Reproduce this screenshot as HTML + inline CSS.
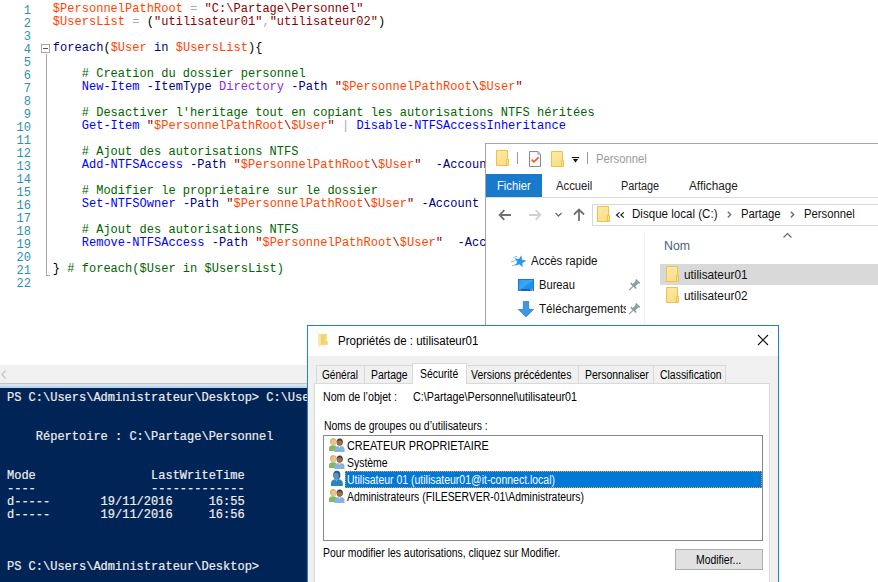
<!DOCTYPE html>
<html><head><meta charset="utf-8">
<style>
*{margin:0;padding:0;box-sizing:border-box}
html,body{width:878px;height:582px;overflow:hidden;background:#fff;position:relative}
.mono{font-family:"Liberation Mono",monospace;font-size:12px;line-height:13px;white-space:pre}
.sans{font-family:"Liberation Sans",sans-serif;white-space:pre}
.abs{position:absolute}
.tx{position:absolute;font-family:"Liberation Sans",sans-serif;white-space:pre;line-height:16px;transform-origin:0 0}
#ln{position:absolute;left:0;top:4.5px;width:31px;text-align:right;color:#2B91AF}
#code{position:absolute;left:52.8px;top:3px;color:#000;letter-spacing:0.025px}
.v{color:#FF4500}.s{color:#8B0000}.k{color:#00008B}.c{color:#0000FF}.p{color:#000080}.a{color:#8A2BE2}.o{color:#A9A9A9}.cm{color:#006400}
#console{position:absolute;left:0;top:388px;width:307px;height:194px;background:#012456;overflow:hidden}
#ctext{position:absolute;left:7px;top:4px;color:#EEEDF0;-webkit-text-stroke:0.2px #EEEDF0}
</style></head><body>
<svg width="0" height="0" style="position:absolute"><defs><linearGradient id="fg" x1="0" y1="0" x2="0.3" y2="1"><stop offset="0" stop-color="#fde8a6"/><stop offset="1" stop-color="#fcdf8a"/></linearGradient></defs></svg>
<div id="ln" class="mono">1
2
3
4
5
6
7
8
9
10
11
12
13
14
15
16
17
18
19
20
21
22</div>
<div class="abs" style="left:41px;top:44px;width:9px;height:9px;border:1px solid #a5a5a5;background:#fff"></div>
<div class="abs" style="left:43px;top:48px;width:5px;height:1px;background:#555"></div>
<div class="abs" style="left:46px;top:54px;width:1px;height:222px;background:#a5a5a5"></div>
<div class="abs" style="left:46px;top:275px;width:4px;height:1px;background:#a5a5a5"></div>
<div id="code" class="mono"><span class="v">$PersonnelPathRoot</span> <span class="o">=</span> <span class="s">"C:\Partage\Personnel"</span>
<span class="v">$UsersList</span> <span class="o">=</span> (<span class="s">"utilisateur01"</span><span class="o">,</span><span class="s">"utilisateur02"</span>)

<span class="k">foreach</span>(<span class="v">$User</span> <span class="k">in</span> <span class="v">$UsersList</span>){

    <span class="cm"># Creation du dossier personnel</span>
    <span class="c">New-Item</span> <span class="p">-ItemType</span> <span class="a">Directory</span> <span class="p">-Path</span> <span class="s">"</span><span class="v">$PersonnelPathRoot</span><span class="s">\</span><span class="v">$User</span><span class="s">"</span>

    <span class="cm"># Desactiver l'heritage tout en copiant les autorisations NTFS héritées</span>
    <span class="c">Get-Item</span> <span class="s">"</span><span class="v">$PersonnelPathRoot</span><span class="s">\</span><span class="v">$User</span><span class="s">"</span> <span class="o">|</span> <span class="c">Disable-NTFSAccessInheritance</span>

    <span class="cm"># Ajout des autorisations NTFS</span>
    <span class="c">Add-NTFSAccess</span> <span class="p">-Path</span> <span class="s">"</span><span class="v">$PersonnelPathRoot</span><span class="s">\</span><span class="v">$User</span><span class="s">"</span>  <span class="p">-Account</span> <span class="s">"IT-CONNECT\$User"</span>

    <span class="cm"># Modifier le proprietaire sur le dossier</span>
    <span class="c">Set-NTFSOwner</span> <span class="p">-Path</span> <span class="s">"</span><span class="v">$PersonnelPathRoot</span><span class="s">\</span><span class="v">$User</span><span class="s">"</span> <span class="p">-Account</span> <span class="s">"IT-CONNECT\$User"</span>

    <span class="cm"># Ajout des autorisations NTFS</span>
    <span class="c">Remove-NTFSAccess</span> <span class="p">-Path</span> <span class="s">"</span><span class="v">$PersonnelPathRoot</span><span class="s">\</span><span class="v">$User</span><span class="s">"</span>  <span class="p">-Account</span> <span class="s">"CREATEUR PROPRIETAIRE"</span>

} <span class="cm"># foreach($User in $UsersList)</span>
</div>
<!-- hscroll -->
<div class="abs" style="left:0;top:365px;width:307px;height:18px;background:#f0f0f0"></div>
<svg class="abs" style="left:0;top:365px" width="12" height="18"><path d="M5.5 5.5 L2 9.5 L5.5 13.5" stroke="#c4c4c4" stroke-width="1.2" fill="none"/></svg>
<div class="abs" style="left:0;top:383px;width:307px;height:1px;background:#c9c3bb"></div>
<div class="abs" style="left:0;top:384px;width:307px;height:2px;background:#dae5ee"></div>
<div class="abs" style="left:0;top:386px;width:307px;height:2px;background:#bcd7f6"></div>
<div id="console"><div id="ctext" class="mono">PS C:\Users\Administrateur\Desktop> C:\Users\Administrateur\Desktop\script.ps1


    Répertoire : C:\Partage\Personnel


Mode                LastWriteTime         Length Name
----                -------------         ------ ----
d-----       19/11/2016     16:55                utilisateur01
d-----       19/11/2016     16:56                utilisateur02



PS C:\Users\Administrateur\Desktop></div></div>

<!-- EXPLORER -->
<div class="abs" style="left:485px;top:143px;width:393px;height:182px;background:#fff;border-left:1px solid #a3a3a3;border-top:1px solid #a6a6a6"></div>
<svg class="abs" style="left:496px;top:150px" width="14" height="16"><path d="M0.5 0.5 H11.5 V15.5 H0.5 Z" fill="url(#fg)" stroke="#ebc24a"/><path d="M10.5 9.5 H12.5 V15.5 H10.5 Z" fill="#fce394" stroke="#ebc24a"/></svg>
<div class="abs" style="left:517px;top:152px;width:1px;height:12px;background:#9a9a9a"></div>
<svg class="abs" style="left:529px;top:151px" width="14" height="17"><path d="M0.5 0.5 H8.8 L11.5 3.2 V15.5 H0.5 Z" fill="#f6f8fa" stroke="#8a8a8a"/><path d="M8.8 0.5 V3.2 H11.5Z" fill="#e6e6e6" stroke="#9a9a9a" stroke-width="0.8"/><path d="M2.6 8.6 L4.9 10.9 L9.6 6.4" stroke="#f05a28" stroke-width="1.5" fill="none"/></svg>
<svg class="abs" style="left:551px;top:151px" width="14" height="16"><path d="M0.5 0.5 H11.5 V15.5 H0.5 Z" fill="url(#fg)" stroke="#ebc24a"/><path d="M10.5 9.5 H12.5 V15.5 H10.5 Z" fill="#fce394" stroke="#ebc24a"/></svg>
<svg class="abs" style="left:570px;top:154px" width="12" height="12"><rect x="1.8" y="3" width="7.4" height="1.1" fill="#111"/><path d="M2.9 5 H8.1 L5.5 8.6 Z" fill="#111"/></svg>
<div class="abs" style="left:587px;top:152px;width:1px;height:12px;background:#9a9a9a"></div>
<div class="abs" style="left:486px;top:174px;width:56px;height:23px;background:#1979ca"></div>
<div class="abs" style="left:486px;top:197px;width:392px;height:1px;background:#dadbdc"></div>
<svg class="abs" style="left:486px;top:198px" width="106" height="34">
 <path d="M13.6 17 H25 M18.3 12.2 L13.6 17 L18.3 21.8" stroke="#707070" stroke-width="1.8" fill="none"/>
 <path d="M43 17 H54.4 M49.7 12.2 L54.4 17 L49.7 21.8" stroke="#d2d2d2" stroke-width="1.8" fill="none"/>
 <path d="M69.5 15 L72.5 18 L75.5 15" stroke="#6d6d6d" stroke-width="1.3" fill="none"/>
 <path d="M93 11.5 V23 M88 16.5 L93 11.5 L98 16.5" stroke="#707070" stroke-width="1.8" fill="none"/>
</svg>
<div class="abs" style="left:592px;top:204px;width:290px;height:22px;border:1px solid #d9d9d9;background:#fff"></div>
<svg class="abs" style="left:597px;top:206px" width="14" height="16"><path d="M0.5 0.5 H11.5 V15.5 H0.5 Z" fill="url(#fg)" stroke="#ebc24a"/><path d="M10.5 9.5 H12.5 V15.5 H10.5 Z" fill="#fce394" stroke="#ebc24a"/></svg>
<svg class="abs" style="left:615px;top:211px" width="11" height="8"><path d="M4.6 1.4 L1.5 4 L4.6 6.6 M8.9 1.4 L5.8 4 L8.9 6.6" stroke="#1a1a1a" stroke-width="1.15" fill="none"/></svg>
<svg class="abs" style="left:724px;top:209px" width="10" height="12"><path d="M3.8 2.8 L6.6 5.6 L3.8 8.4" stroke="#6e6e6e" stroke-width="1.4" fill="none"/></svg>
<svg class="abs" style="left:787px;top:209px" width="10" height="12"><path d="M3.8 2.8 L6.6 5.6 L3.8 8.4" stroke="#6e6e6e" stroke-width="1.4" fill="none"/></svg>
<div class="abs" style="left:644px;top:233px;width:1px;height:92px;background:#f0f0f0"></div>
<svg class="abs" style="left:508px;top:254px" width="22" height="16"><path d="M5.5 3.5 L9.5 2.2 M3 7.8 L7.5 6.6 M4 11.8 L8 10.4" stroke="#7cc0f2" stroke-width="1"/><path d="M13.33 1.24 L14.08 5.63 L18.36 6.83 L14.42 8.90 L14.60 13.35 L11.42 10.24 L7.24 11.78 L9.22 7.79 L6.46 4.30 L10.86 4.94Z" fill="#2a98ee"/></svg>
<svg class="abs" style="left:518px;top:279px" width="17" height="13"><defs><linearGradient id="bg1" x1="0" y1="0" x2="1" y2="1"><stop offset="0" stop-color="#2a9cf6"/><stop offset="0.5" stop-color="#3aa6f8"/><stop offset="0.52" stop-color="#2293f0"/><stop offset="1" stop-color="#1e8ae6"/></linearGradient></defs><rect x="0.5" y="0.5" width="15" height="11" fill="url(#bg1)" stroke="#1a78c8"/><rect x="1" y="10" width="14" height="2" fill="#1766b0"/><rect x="1.5" y="10.5" width="1" height="1" fill="#fff"/><rect x="12.5" y="10.5" width="1" height="1" fill="#fff"/><rect x="14" y="10.5" width="1" height="1" fill="#fff"/></svg>
<svg class="abs" style="left:627px;top:279px" width="14" height="14"><g transform="translate(6.5,6.8) rotate(45) scale(1.05)" fill="#8e99a2"><rect x="-2.6" y="-6.5" width="5.2" height="1.6"/><rect x="-1.7" y="-5" width="3.4" height="4.5"/><rect x="-3.6" y="-0.8" width="7.2" height="1.6"/><rect x="-0.55" y="0.8" width="1.1" height="5"/></g></svg>
<svg class="abs" style="left:518px;top:300px" width="17" height="18"><path d="M5.3 1.5 H10.7 V9.5 H15.5 L8 16.8 L0.5 9.5 H5.3Z" fill="#3c97e7" stroke="#2b7fd0" stroke-width="0.8" stroke-linejoin="miter"/></svg>
<div class="abs" style="left:539px;top:300px;width:87px;height:18px;overflow:hidden"><div class="tx" style="left:0;top:0.84px;font-size:12px;color:#111;transform:scaleX(0.97)">Téléchargements</div></div>
<svg class="abs" style="left:627px;top:303px" width="14" height="14"><g transform="translate(6.5,6.8) rotate(45) scale(1.05)" fill="#8e99a2"><rect x="-2.6" y="-6.5" width="5.2" height="1.6"/><rect x="-1.7" y="-5" width="3.4" height="4.5"/><rect x="-3.6" y="-0.8" width="7.2" height="1.6"/><rect x="-0.55" y="0.8" width="1.1" height="5"/></g></svg>
<svg class="abs" style="left:782px;top:231px" width="12" height="8"><path d="M1.5 6.5 L5.5 2.5 L9.5 6.5" stroke="#666" stroke-width="1.1" fill="none"/></svg>
<div class="abs" style="left:660px;top:264px;width:218px;height:21px;background:#d9d9d9"></div>
<svg class="abs" style="left:666px;top:266px" width="14" height="16"><path d="M0.5 0.5 H11.5 V15.5 H0.5 Z" fill="url(#fg)" stroke="#ebc24a"/><path d="M10.5 9.5 H12.5 V15.5 H10.5 Z" fill="#fce394" stroke="#ebc24a"/></svg>
<svg class="abs" style="left:666px;top:287px" width="14" height="16"><path d="M0.5 0.5 H11.5 V15.5 H0.5 Z" fill="url(#fg)" stroke="#ebc24a"/><path d="M10.5 9.5 H12.5 V15.5 H10.5 Z" fill="#fce394" stroke="#ebc24a"/></svg>

<!-- DIALOG -->
<div class="abs" style="left:307px;top:325px;width:472px;height:260px;background:#fff;border:1px solid #1f83d5"></div>
<svg class="abs" style="left:318px;top:334px" width="11" height="14"><path d="M0.5 0 H8.7 V7 H9.7 V11 H0.5Z" fill="#f7d675"/><path d="M0.5 0.3 L3.7 2 V11.3 L0.5 13.3Z" fill="#fbe6a6"/><path d="M3.7 2 V11.3" stroke="#eec45a" stroke-width="0.8"/></svg>
<svg class="abs" style="left:757px;top:334px" width="12" height="12"><path d="M1 1 L11 11 M11 1 L1 11" stroke="#111" stroke-width="1.1"/></svg>
<div class="abs" style="left:308px;top:356px;width:470px;height:226px;background:#f0f0f0"></div>
<div class="abs" style="left:316px;top:365px;width:49px;height:19px;border:1px solid #d9d9d9;border-bottom:none;background:#f0f0f0"></div>
<div class="abs" style="left:364px;top:365px;width:49px;height:19px;border:1px solid #d9d9d9;border-bottom:none;background:#f0f0f0"></div>
<div class="abs" style="left:466px;top:365px;width:113px;height:19px;border:1px solid #d9d9d9;border-bottom:none;background:#f0f0f0"></div>
<div class="abs" style="left:578px;top:365px;width:76px;height:19px;border:1px solid #d9d9d9;border-bottom:none;background:#f0f0f0"></div>
<div class="abs" style="left:653px;top:365px;width:73px;height:19px;border:1px solid #d9d9d9;border-bottom:none;background:#f0f0f0"></div>
<div class="abs" style="left:314px;top:383px;width:456px;height:210px;border:1px solid #d9d9d9;background:#fff"></div>
<div class="abs" style="left:412px;top:363px;width:55px;height:21px;border:1px solid #d9d9d9;border-bottom:none;background:#fff"></div>
<div class="abs" style="left:323px;top:435px;width:440px;height:106px;border:1px solid #828790;background:#fff"></div>
<div class="abs" style="left:345px;top:471px;width:417px;height:17px;background:#0078d7;outline:1px dotted #f0a030;outline-offset:-1px"></div>
<svg class="abs" style="left:329px;top:437px" width="17" height="16">
<ellipse cx="4.2" cy="4.6" rx="3.2" ry="3.6" fill="#d6b56c"/><ellipse cx="4.8" cy="5.4" rx="2.4" ry="2.8" fill="#e6c39a"/>
<path d="M0 14 V11.2 Q0 8.3 4 8.3 Q7.3 8.3 7.8 10.5 V14.2Z" fill="#84b85c"/>
<ellipse cx="10.7" cy="5" rx="3.1" ry="3.6" fill="#3b3b3b"/><ellipse cx="10.5" cy="6" rx="2.6" ry="2.7" fill="#a46e43"/>
<path d="M5.5 15 V12 Q5.5 9 10.5 9 Q15.5 9 15.5 12 V15Z" fill="#86b3e0"/><path d="M9.3 9.3 L10.5 11 L11.7 9.3Z" fill="#e8f2fb"/>
</svg>
<svg class="abs" style="left:329px;top:454px" width="17" height="16">
<ellipse cx="4.2" cy="4.6" rx="3.2" ry="3.6" fill="#d6b56c"/><ellipse cx="4.8" cy="5.4" rx="2.4" ry="2.8" fill="#e6c39a"/>
<path d="M0 14 V11.2 Q0 8.3 4 8.3 Q7.3 8.3 7.8 10.5 V14.2Z" fill="#84b85c"/>
<ellipse cx="10.7" cy="5" rx="3.1" ry="3.6" fill="#3b3b3b"/><ellipse cx="10.5" cy="6" rx="2.6" ry="2.7" fill="#a46e43"/>
<path d="M5.5 15 V12 Q5.5 9 10.5 9 Q15.5 9 15.5 12 V15Z" fill="#86b3e0"/><path d="M9.3 9.3 L10.5 11 L11.7 9.3Z" fill="#e8f2fb"/>
</svg>
<svg class="abs" style="left:331px;top:470px" width="13" height="17"><ellipse cx="5.8" cy="5" rx="3.6" ry="4.3" fill="#1f5d9c"/><ellipse cx="5.2" cy="6" rx="2.6" ry="3.2" fill="#5e8fb8"/><path d="M0 16 V12.8 Q0.5 9 5.8 9 Q11.5 9 11.8 12.8 V16Z" fill="#2f86b6"/><path d="M4.2 9.3 L5.3 11.5 L6.6 9.3Z" fill="#79b8e0"/></svg>
<svg class="abs" style="left:329px;top:488px" width="17" height="16">
<ellipse cx="4.2" cy="4.6" rx="3.2" ry="3.6" fill="#d6b56c"/><ellipse cx="4.8" cy="5.4" rx="2.4" ry="2.8" fill="#e6c39a"/>
<path d="M0 14 V11.2 Q0 8.3 4 8.3 Q7.3 8.3 7.8 10.5 V14.2Z" fill="#84b85c"/>
<ellipse cx="10.7" cy="5" rx="3.1" ry="3.6" fill="#3b3b3b"/><ellipse cx="10.5" cy="6" rx="2.6" ry="2.7" fill="#a46e43"/>
<path d="M5.5 15 V12 Q5.5 9 10.5 9 Q15.5 9 15.5 12 V15Z" fill="#86b3e0"/><path d="M9.3 9.3 L10.5 11 L11.7 9.3Z" fill="#e8f2fb"/>
</svg>
<div class="abs" style="left:675px;top:549px;width:88px;height:21px;border:1px solid #adadad;background:#e1e1e1"></div>
<div class="tx" style="left:595.50px;top:150.84px;font-size:12px;color:#9b9b9b;transform:scaleX(0.9381)">Personnel</div>
<div class="tx" style="left:497.30px;top:177.84px;font-size:12px;color:#fff;transform:scaleX(0.9357)">Fichier</div>
<div class="tx" style="left:556.00px;top:177.84px;font-size:12px;color:#222;transform:scaleX(0.9400)">Accueil</div>
<div class="tx" style="left:621.40px;top:177.84px;font-size:12px;color:#222;transform:scaleX(0.9041)">Partage</div>
<div class="tx" style="left:689.00px;top:177.84px;font-size:12px;color:#222;transform:scaleX(0.9794)">Affichage</div>
<div class="tx" style="left:632.00px;top:205.84px;font-size:12px;color:#111;transform:scaleX(0.9639)">Disque local (C:)</div>
<div class="tx" style="left:741.20px;top:205.84px;font-size:12px;color:#111;transform:scaleX(0.9422)">Partage</div>
<div class="tx" style="left:804.00px;top:205.84px;font-size:12px;color:#111;transform:scaleX(0.9381)">Personnel</div>
<div class="tx" style="left:531.30px;top:252.84px;font-size:12px;color:#111;transform:scaleX(0.9586)">Accès rapide</div>
<div class="tx" style="left:539.30px;top:276.84px;font-size:12px;color:#111;transform:scaleX(0.9302)">Bureau</div>
<div class="tx" style="left:663.60px;top:237.84px;font-size:12px;color:#4c607a;transform:scaleX(1.0259)">Nom</div>
<div class="tx" style="left:684.40px;top:267.34px;font-size:12px;color:#111;transform:scaleX(0.9812)">utilisateur01</div>
<div class="tx" style="left:684.40px;top:287.84px;font-size:12px;color:#111;transform:scaleX(0.9812)">utilisateur02</div>
<div class="tx" style="left:337.70px;top:332.67px;font-size:12.5px;color:#000;transform:scaleX(0.9226)">Propriétés de : utilisateur01</div>
<div class="tx" style="left:321.80px;top:366.67px;font-size:12.5px;color:#000;transform:scaleX(0.8093)">Général</div>
<div class="tx" style="left:371.40px;top:366.67px;font-size:12.5px;color:#000;transform:scaleX(0.8350)">Partage</div>
<div class="tx" style="left:420.00px;top:365.67px;font-size:12.5px;color:#000;transform:scaleX(0.8350)">Sécurité</div>
<div class="tx" style="left:471.00px;top:366.67px;font-size:12.5px;color:#000;transform:scaleX(0.8350)">Versions précédentes</div>
<div class="tx" style="left:585.30px;top:366.67px;font-size:12.5px;color:#000;transform:scaleX(0.8350)">Personnaliser</div>
<div class="tx" style="left:659.50px;top:366.67px;font-size:12.5px;color:#000;transform:scaleX(0.8350)">Classification</div>
<div class="tx" style="left:323.40px;top:388.67px;font-size:12.5px;color:#000;transform:scaleX(0.8520)">Nom de l’objet :</div>
<div class="tx" style="left:412.50px;top:388.67px;font-size:12.5px;color:#000;transform:scaleX(0.8614)">C:\Partage\Personnel\utilisateur01</div>
<div class="tx" style="left:323.60px;top:417.67px;font-size:12.5px;color:#000;transform:scaleX(0.8355)">Noms de groupes ou d’utilisateurs :</div>
<div class="tx" style="left:346.90px;top:437.67px;font-size:12.5px;color:#000;transform:scaleX(0.8669)">CREATEUR PROPRIETAIRE</div>
<div class="tx" style="left:346.90px;top:454.67px;font-size:12.5px;color:#000;transform:scaleX(0.8350)">Système</div>
<div class="tx" style="left:346.90px;top:471.67px;font-size:12.5px;color:#fff;transform:scaleX(0.8380)">Utilisateur 01 (utilisateur01@it-connect.local)</div>
<div class="tx" style="left:346.90px;top:488.67px;font-size:12.5px;color:#000;transform:scaleX(0.8328)">Administrateurs (FILESERVER-01\Administrateurs)</div>
<div class="tx" style="left:323.20px;top:545.17px;font-size:12.5px;color:#000;transform:scaleX(0.8314)">Pour modifier les autorisations, cliquez sur Modifier.</div>
<div class="tx" style="left:696.00px;top:551.67px;font-size:12.5px;color:#000;transform:scaleX(0.8350)">Modifier...</div>
</body></html>
